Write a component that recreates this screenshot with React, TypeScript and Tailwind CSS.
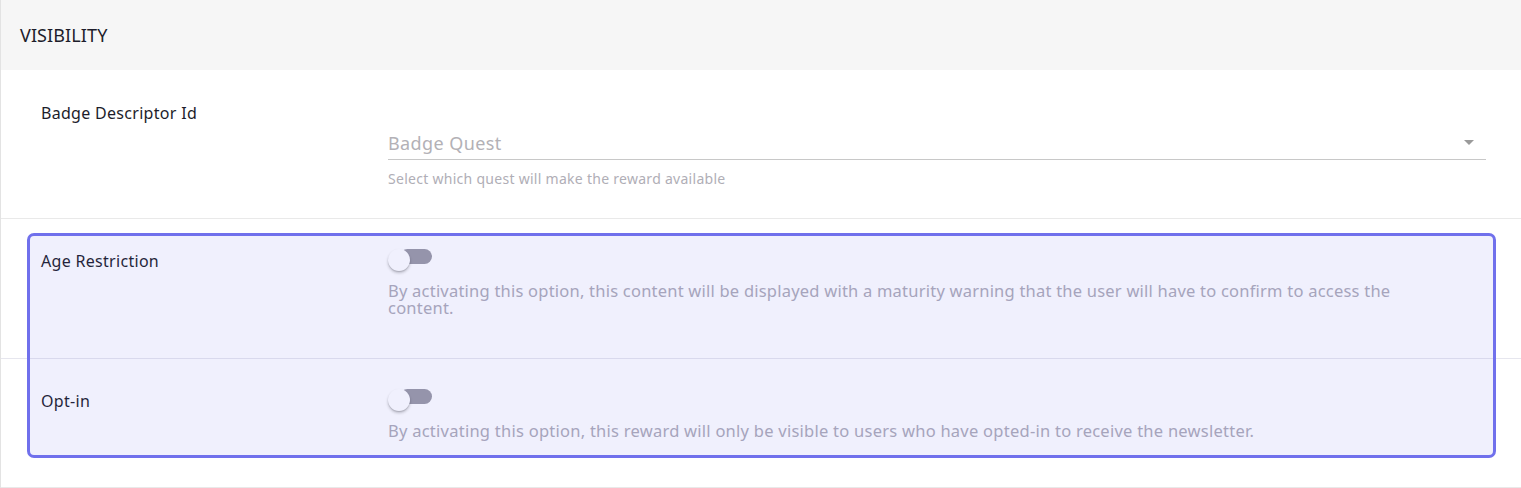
import React from "react";

function Toggle() {
  return (
    <div className="relative h-[22px] w-[46px]">
      <div className="absolute left-[12px] top-0 h-[15px] w-[32px] rounded-full bg-[#9b9aa5]" />
      <div className="absolute left-0 top-0 h-[22px] w-[22px] rounded-full bg-white shadow-[0_2px_3px_rgba(0,0,0,0.22),0_1px_1px_rgba(0,0,0,0.12)]" />
    </div>
  );
}

export default function App() {
  const font = { fontFamily: '"Noto Sans", "Open Sans", sans-serif' };
  return (
    <div style={font} className="relative h-[488px] w-full overflow-hidden border-l border-[#e3e3e3] bg-white">
      <div className="flex h-[70px] items-center bg-[#f6f6f6] px-[19px] text-[18px] tracking-[0.1px] text-[#1d1d2b]">
        VISIBILITY
      </div>

      <div className="flex h-[149px] border-b border-[#e9e9e9] pl-[40px] pr-[35px]">
        <div className="w-[347px] pt-[33px] text-[16px] leading-[20px] tracking-[0.3px] text-[#1d1d2b]">
          Badge Descriptor Id
        </div>
        <div className="flex-1 pt-[59px]">
          <div className="flex h-[31px] items-center justify-between border-b border-[#c8c8c8] pb-[2px]">
            <span className="text-[18px] leading-[24px] tracking-[0.4px] text-[#b3b1b6]">Badge Quest</span>
            <svg width="12" height="6" viewBox="0 0 12 6" className="mr-[11px]">
              <path d="M1 0 L11 0 L6 5 Z" fill="#9a9a9a" />
            </svg>
          </div>
          <div className="pt-[10px] text-[14px] leading-[18px] tracking-[0.28px] text-[#b0aeb6]">
            Select which quest will make the reward available
          </div>
        </div>
      </div>

      <div className="flex h-[140px] border-b border-[#e6e6ee] pl-[40px] pr-[35px]">
        <div className="w-[347px] pt-[32px] text-[16px] leading-[20px] tracking-[0.3px] text-[#1d1d2b]">Age Restriction</div>
        <div className="flex-1 pt-[30px]">
          <Toggle />
          <div className="pt-[11px] pr-[60px] text-[16.5px] leading-[17px] tracking-[0.22px] text-[#aeacb8]">
            By activating this option, this content will be displayed with a maturity warning that the user will have to confirm to access the content.
          </div>
        </div>
      </div>

      <div className="flex h-[129px] border-b border-[#e9e9e9] pl-[40px] pr-[35px]">
        <div className="w-[347px] pt-[32px] text-[16px] leading-[20px] tracking-[0.3px] text-[#1d1d2b]">Opt-in</div>
        <div className="flex-1 pt-[30px]">
          <Toggle />
          <div className="pt-[11px] text-[16.5px] leading-[17px] tracking-[0.25px] text-[#aeacb8]">
            By activating this option, this reward will only be visible to users who have opted-in to receive the newsletter.
          </div>
        </div>
      </div>

      <div className="pointer-events-none absolute left-[26px] top-[233px] h-[225px] w-[1469px] rounded-[7px] border-[3px] border-[#7070ec] bg-[#5a5ae6]/[0.09]" />
    </div>
  );
}
